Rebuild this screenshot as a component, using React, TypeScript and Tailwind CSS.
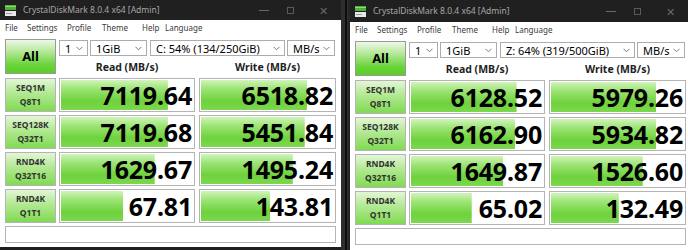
import React from "react";

type Row = { a: string; b: string; read: string; write: string; rp: number; wp: number };

const leftRows: Row[] = [
  { a: "SEQ1M", b: "Q8T1", read: "7119.64", write: "6518.82", rp: 81, wp: 80 },
  { a: "SEQ128K", b: "Q32T1", read: "7119.68", write: "5451.84", rp: 81, wp: 78 },
  { a: "RND4K", b: "Q32T16", read: "1629.67", write: "1495.24", rp: 71, wp: 69 },
  { a: "RND4K", b: "Q1T1", read: "67.81", write: "143.81", rp: 47, wp: 52 },
];

const rightRows: Row[] = [
  { a: "SEQ1M", b: "Q8T1", read: "6128.52", write: "5979.26", rp: 80, wp: 79 },
  { a: "SEQ128K", b: "Q32T1", read: "6162.90", write: "5934.82", rp: 79, wp: 79 },
  { a: "RND4K", b: "Q32T16", read: "1649.87", write: "1526.60", rp: 70, wp: 69 },
  { a: "RND4K", b: "Q1T1", read: "65.02", write: "132.49", rp: 46, wp: 51 },
];

function Chevron() {
  return (
    <svg width="7" height="5" viewBox="0 0 7 5" className="shrink-0">
      <path d="M0.5 0.8 L3.5 3.8 L6.5 0.8" fill="none" stroke="#7a7a7a" strokeWidth="1" />
    </svg>
  );
}

function Select({ w, text }: { w: string; text: string }) {
  return (
    <div className={`${w} h-[16px] border border-[#acacac] bg-white flex items-center justify-between pl-[5px] pr-[4px]`}>
      <span className="text-[11px] leading-none text-black whitespace-nowrap">{text}</span>
      <Chevron />
    </div>
  );
}

function AppIcon() {
  return (
    <svg width="11" height="11" viewBox="0 0 11 11">
      <rect x="0" y="0" width="11" height="5" fill="#4caf3c" />
      <rect x="0" y="1" width="11" height="1" fill="#8fdc6c" />
      <rect x="0" y="6" width="11" height="5" fill="#e8e8e8" />
      <rect x="1" y="8" width="6" height="1" fill="#9a9a9a" />
    </svg>
  );
}

function Cell({ value, pct, w }: { value: string; pct: number; w: string }) {
  return (
    <div className={`${w} h-[34px] border border-[#b4b4b4] bg-white p-[1px]`}>
      <div
        className="h-full flex items-center justify-end pr-[1px] bg-no-repeat bg-[linear-gradient(180deg,#d2f3bb_0%,#9be474_30%,#6ed23c_70%,#7cd84e_100%)]"
        style={{ backgroundSize: `${pct}% 100%` }}
      >
        <span className="text-[25px] font-bold leading-none text-black tracking-[-0.2px]">{value}</span>
      </div>
    </div>
  );
}

function Window({ drive, rows, title }: { drive: string; rows: Row[]; title: string }) {
  return (
    <div className="flex flex-col bg-white h-full">
      <div className={`${title} bg-[#202020] flex items-center pl-[5px] shrink-0`}>
        <AppIcon />
        <span className="ml-[7px] text-[8.5px] text-[#a8a8a8] whitespace-nowrap">CrystalDiskMark 8.0.4 x64 [Admin]</span>
        <div className="ml-auto flex items-center text-[#6a6a6a]">
          <span className="w-[10px] h-[1px] bg-[#6a6a6a] mr-[18px]" />
          <span className="w-[7px] h-[7px] border border-[#5a5a5a] mr-[25px]" />
          <span className="text-[11px] leading-none mr-[13px]">✕</span>
        </div>
      </div>
      <div className="h-[16px] flex items-center pl-[5px] text-[8px] text-[#3a3a3a] shrink-0 whitespace-nowrap">
        <span className="w-[22px]">File</span>
        <span className="w-[40px]">Settings</span>
        <span className="w-[35px]">Profile</span>
        <span className="w-[40px]">Theme</span>
        <span className="w-[23px]">Help</span>
        <span>Language</span>
      </div>
      <div className="pl-[5px] pt-[3px] flex flex-col">
        <div className="flex h-[35px]">
          <div className="w-[51px] h-[35px] border border-[#9a9a9a] bg-[linear-gradient(180deg,#eef8e8_0%,#b4e898_35%,#6ad43a_75%,#5ccc2a_100%)] flex items-center justify-center">
            <span className="text-[13px] font-bold text-black">All</span>
          </div>
          <div className="ml-[3px] flex flex-col">
            <div className="flex mt-[1px]">
              <Select w="w-[29px]" text="1" />
              <div className="w-[2px]" />
              <Select w="w-[57px]" text="1GiB" />
              <div className="w-[3px]" />
              <Select w="w-[135px]" text={drive} />
              <div className="w-[2px]" />
              <Select w="w-[48px]" text="MB/s" />
            </div>
            <div className="flex mt-[6px] text-[10.5px] font-bold text-[#222] leading-none">
              <span className="w-[136px] text-center">Read (MB/s)</span>
              <span className="w-[137px] ml-[4px] text-center">Write (MB/s)</span>
            </div>
          </div>
        </div>
        <div className="flex flex-col gap-[3px] mt-[4px]">
          {rows.map((r, i) => (
            <div key={i} className="flex">
              <div className="w-[51px] h-[34px] border border-[#b4b4b4] bg-[linear-gradient(180deg,#e4f6d8_0%,#b6ea98_40%,#80da52_100%)] flex flex-col items-center justify-center">
                <span className="text-[8.5px] font-bold text-[#333] leading-[14px]">{r.a}</span>
                <span className="text-[8.5px] font-bold text-[#333] leading-[14px]">{r.b}</span>
              </div>
              <div className="w-[3px]" />
              <Cell value={r.read} pct={r.rp} w="w-[136px]" />
              <div className="w-[4px]" />
              <Cell value={r.write} pct={r.wp} w="w-[137px]" />
            </div>
          ))}
          <div className="w-[331px] h-[17px] border border-[#b4b4b4] bg-white" />
        </div>
      </div>
    </div>
  );
}

export default function App() {
  return (
    <div className="w-[688px] h-[250px] bg-[#1e1e1e] flex font-['Noto_Sans',sans-serif] overflow-hidden">
      <div className="w-[341px] h-[247px] shrink-0">
        <Window drive="C: 54% (134/250GiB)" rows={leftRows} title="h-[20px]" />
      </div>
      <div className="w-[7px] h-full shrink-0 bg-[#2e2e2e] flex">
        <div className="ml-[4px] w-[2px] h-full bg-[#0e0e0e]" />
      </div>
      <div className="w-[340px] h-full shrink-0 border-l-[2px] border-[#262626]">
        <div className="h-full bg-white">
          <Window drive="Z: 64% (319/500GiB)" rows={rightRows} title="h-[22px]" />
        </div>
      </div>
    </div>
  );
}
